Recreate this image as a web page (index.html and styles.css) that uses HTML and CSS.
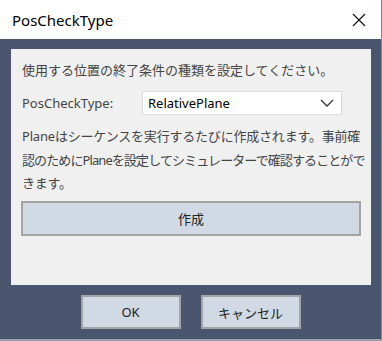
FILE: index.html
```html
<!DOCTYPE html>
<html lang="ja">
<head>
    <meta charset="UTF-8">
    <title>PosCheckType</title>
    <link rel="stylesheet" href="styles.css">
</head>
<body>
    <div class="window">
        <div class="titlebar">
            <span class="title">PosCheckType</span>
            <svg class="close" width="14" height="14" viewBox="0 0 14 14">
                <path d="M1 1 L13 13 M13 1 L1 13" stroke="#111" stroke-width="1.2" fill="none"/>
            </svg>
        </div>
        <div class="client">
            <div class="panel">
                <p class="intro">使用する位置の終了条件の種類を設定してください。</p>
                <div class="field">
                    <label class="label">PosCheckType:</label>
                    <div class="select">
                        <span>RelativePlane</span>
                        <svg width="14" height="8" viewBox="0 0 14 8">
                            <path d="M1 1 L7 7 L13 1" stroke="#333" stroke-width="1.3" fill="none"/>
                        </svg>
                    </div>
                </div>
                <p class="note">Planeはシーケンスを実行するたびに作成されます。事前確<br><span class="tight">認のためにPlaneを設定してシミュレーターで確認することがで</span><br>きます。</p>
                <button class="btn wide">作成</button>
            </div>
            <div class="footer">
                <button class="btn">OK</button>
                <button class="btn">キャンセル</button>
            </div>
        </div>
    </div>
</body>
</html>
```

FILE: styles.css
```css
/* Page */
body {
    margin: 0;
    font-family: "Noto Sans", "Noto Sans CJK JP", sans-serif;
    background: #4a566f;
}

/* Window frame */
.window {
    width: 382px;
    height: 341px;
    box-sizing: border-box;
    display: flex;
    flex-direction: column;
    border-right: 1px solid #7d8596;
    border-bottom: 2px solid #9aa0ad;
}

.titlebar {
    height: 39px;
    background: #fff;
    display: flex;
    align-items: center;
    justify-content: space-between;
    padding: 0 15px 0 12px;
}

.title {
    font-size: 15px;
    color: #000;
}

/* Client area */
.client {
    flex: 1;
    background: #4a566f;
    padding: 10px 10px 0 11px;
}

.panel {
    height: 236px;
    box-sizing: border-box;
    background: #f0f0f0;
    padding: 11px 10px 0 10px;
    color: #444;
    font-size: 13px;
}

.intro {
    margin: 0 0 0 1px;
    line-height: 20px;
}

.field {
    display: flex;
    align-items: center;
    margin-top: 11px;
}

.label {
    width: 120px;
    padding-left: 1px;
}

.select {
    width: 200px;
    height: 24px;
    box-sizing: border-box;
    background: #fff;
    border: 1px solid #dcdcdc;
    display: flex;
    align-items: center;
    justify-content: space-between;
    padding: 0 7px 0 5px;
    color: #000;
}

.note {
    margin: 10px -10px 0 1px;
    line-height: 23.5px;
    white-space: nowrap;
    letter-spacing: -0.2px;
}

.tight {
    letter-spacing: -0.9px;
}

/* Buttons */
.btn {
    font-family: inherit;
    font-size: 13px;
    color: #222;
    background: #d1d9e5;
    border: 2px solid #a3a3a3;
    width: 100px;
    height: 34px;
    padding: 0;
}

.wide {
    display: block;
    width: 340px;
    height: 35px;
    margin-top: 5px;
}

.footer {
    display: flex;
    justify-content: center;
    gap: 20px;
    margin-top: 10px;
    padding-right: 1px;
}
```
